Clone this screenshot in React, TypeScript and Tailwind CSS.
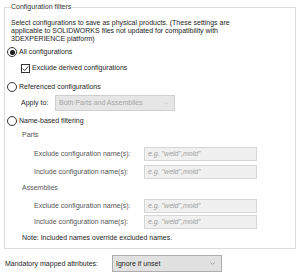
import { ChevronDown } from 'lucide-react'

function Radio({ checked }: { checked?: boolean }) {
    return (
        <span className="w-[10px] h-[10px] rounded-full border border-[#333333] bg-white flex items-center justify-center shrink-0">
            {checked && <span className="w-[5px] h-[5px] rounded-full bg-[#1a1a1a]" />}
        </span>
    )
}

function Check() {
    return (
        <span className="w-[9px] h-[9px] border border-[#333333] bg-white flex items-center justify-center shrink-0">
            <svg width="7" height="7" viewBox="0 0 8 8">
                <path d="M1 4.2 L3.1 6.3 L7 1.8" fill="none" stroke="#222" strokeWidth="1" />
            </svg>
        </span>
    )
}

function NameRow({ label, className }: { label: string; className?: string }) {
    return (
        <div className={'flex items-center h-[14px] ' + (className ?? '')}>
            <span className="w-[139px] pl-[29px] text-[#555555] shrink-0 whitespace-nowrap">{label}</span>
            <div className="w-[113px] h-[14px] bg-[#f0f0f0] border border-[#d6d6d6] flex items-center pl-[3px] italic text-[#a0a0a0]">
                e.g. "weld",mold"
            </div>
        </div>
    )
}

export default function App() {
    return (
        <div className="w-[300px] h-[276px] bg-white text-[7px] leading-[8px] text-[#1e1e1e] font-['Liberation_Sans',Arial,sans-serif] overflow-hidden">
            <fieldset className="ml-[4px] w-[292px] h-[249px] border border-[#dcdcdc] pl-0 pb-[4px]">
                <legend className="ml-[6px] leading-[14px] text-[#333333]">Configuration filters</legend>

                {/* Description */}
                <p className="mt-[5px] pl-[6px] w-[246px] leading-[8px]">
                    Select configurations to save as physical products. (These settings are applicable to SOLIDWORKS
                    files not updated for compatibility with 3DEXPERIENCE platform)
                </p>

                <div className="mt-[3px] h-[12px] flex items-center gap-[2px] pl-[2px]">
                    <Radio checked />
                    <span>All configurations</span>
                </div>
                <div className="mt-[4px] h-[12px] flex items-center gap-[2px] pl-[16px]">
                    <Check />
                    <span>Exclude derived configurations</span>
                </div>

                <div className="mt-[7px] h-[12px] flex items-center gap-[2px] pl-[2px]">
                    <Radio />
                    <span>Referenced configurations</span>
                </div>
                <div className="mt-[2px] h-[16px] flex items-center pl-[16px]">
                    <span className="w-[34px]">Apply to:</span>
                    <div className="w-[120px] h-[16px] bg-[#e6e6e6] border border-[#cfcfcf] flex items-center justify-between pl-[3px] pr-[4px] text-[#a5a5a5]">
                        <span>Both Parts and Assemblies</span>
                        <ChevronDown size={7} strokeWidth={1.5} className="text-[#b5b5b5]" />
                    </div>
                </div>

                <div className="mt-[4px] h-[12px] flex items-center gap-[2px] pl-[2px]">
                    <Radio />
                    <span>Name-based filtering</span>
                </div>

                <div className="mt-[3px] h-[10px] flex items-center pl-[17px] text-[#555555]">Parts</div>
                <NameRow label="Exclude configuration name(s):" className="mt-[7px]" />
                <NameRow label="Include configuration name(s):" className="mt-[4px]" />

                <div className="mt-[4px] h-[10px] flex items-center pl-[17px] text-[#555555]">Assemblies</div>
                <NameRow label="Exclude configuration name(s):" className="mt-[6px]" />
                <NameRow label="Include configuration name(s):" className="mt-[2px]" />

                <div className="mt-[4px] h-[10px] flex items-center pl-[17px]">
                    Note: Included names override excluded names.
                </div>
            </fieldset>

            <div className="mt-[6px] h-[17px] flex items-center pl-[5px]">
                <span className="w-[107px]">Mandatory mapped attributes:</span>
                <div className="w-[110px] h-[17px] bg-[#e1e1e1] border border-[#adadad] flex items-center justify-between pl-[3px] pr-[5px]">
                    <span>Ignore if unset</span>
                    <ChevronDown size={7} strokeWidth={1.5} className="text-[#555555]" />
                </div>
            </div>
        </div>
    )
}
